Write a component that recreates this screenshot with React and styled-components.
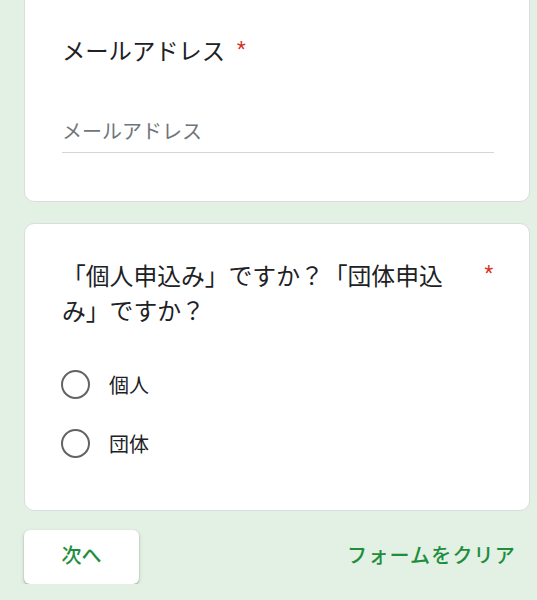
import styled, { createGlobalStyle } from 'styled-components'

const GlobalStyle = createGlobalStyle`
  html, body {
    margin: 0;
    padding: 0;
    background: #e3f1e4;
  }
  body {
    font-family: Roboto, "Noto Sans CJK JP", "Noto Sans", sans-serif;
    color: #202124;
    overflow: hidden;
  }
`

const Page = styled.div`
  display: flex;
  flex-direction: column;
  gap: 21px;
  padding: 0 7px 0 24px;
  margin-top: -20px;
`

const Card = styled.div`
  background: #fff;
  border: 1px solid #dadce0;
  border-radius: 10px;
  padding: ${(p) => p.$pad};
`

const Title = styled.div`
  font-size: 23.3px;
  line-height: 32px;
  display: flex;
  align-items: flex-start;
`

const Star = styled.span`
  color: #d93025;
  font-size: 20px;
  line-height: 26px;
  margin-left: ${(p) => p.$gap || '12px'};
`

const Input = styled.div`
  margin-top: 50px;
  height: 34px;
  border-bottom: 1px solid #d4d6d9;
  font-size: 20px;
  line-height: 28px;
  color: #70757a;
  margin-right: -1px;
`

const QuestionRow = styled.div`
  display: flex;
  align-items: flex-start;
`

const QuestionText = styled.div`
  flex: 1;
  font-size: 23.8px;
  line-height: 35px;
  padding-right: 30px;
`

const Options = styled.div`
  display: flex;
  flex-direction: column;
  gap: 19px;
  margin-top: 34px;
`

const Option = styled.label`
  display: flex;
  align-items: center;
  height: 40px;
  gap: 19px;
  font-size: 20px;
`

const Radio = styled.span`
  box-sizing: border-box;
  width: 29px;
  height: 29px;
  border-radius: 50%;
  border: 2.6px solid #616367;
  margin-left: -1px;
`

const Footer = styled.div`
  display: flex;
  align-items: center;
  justify-content: space-between;
  margin-top: -2px;
  padding-right: 14px;
`

const NextButton = styled.button`
  width: 115px;
  height: 54px;
  padding: 0 0 6px;
  border: none;
  border-radius: 6px;
  background: #fff;
  box-shadow: 0 1px 2px rgba(60, 64, 67, 0.35), 0 2px 4px rgba(60, 64, 67, 0.15);
  color: #1e8e3e;
  font-family: inherit;
  font-size: 20px;
  font-weight: 500;
`

const ClearLink = styled.span`
  color: #1e8e3e;
  font-size: 20px;
  font-weight: 500;
  letter-spacing: 1.2px;
  margin-bottom: 6px;
`

export default function App() {
  return (
    <>
      <GlobalStyle />
      <Page>
        <Card $pad="55px 36px 48px 37px">
          <Title>
            メールアドレス<Star>*</Star>
          </Title>
          <Input>メールアドレス</Input>
        </Card>
        <Card $pad="36px 36px 47px 37px">
          <QuestionRow>
            <QuestionText>「個人申込み」ですか？「団体申込み」ですか？</QuestionText>
            <Star $gap="0">*</Star>
          </QuestionRow>
          <Options>
            <Option>
              <Radio />
              個人
            </Option>
            <Option>
              <Radio />
              団体
            </Option>
          </Options>
        </Card>
        <Footer>
          <NextButton>次へ</NextButton>
          <ClearLink>フォームをクリア</ClearLink>
        </Footer>
      </Page>
    </>
  )
}
